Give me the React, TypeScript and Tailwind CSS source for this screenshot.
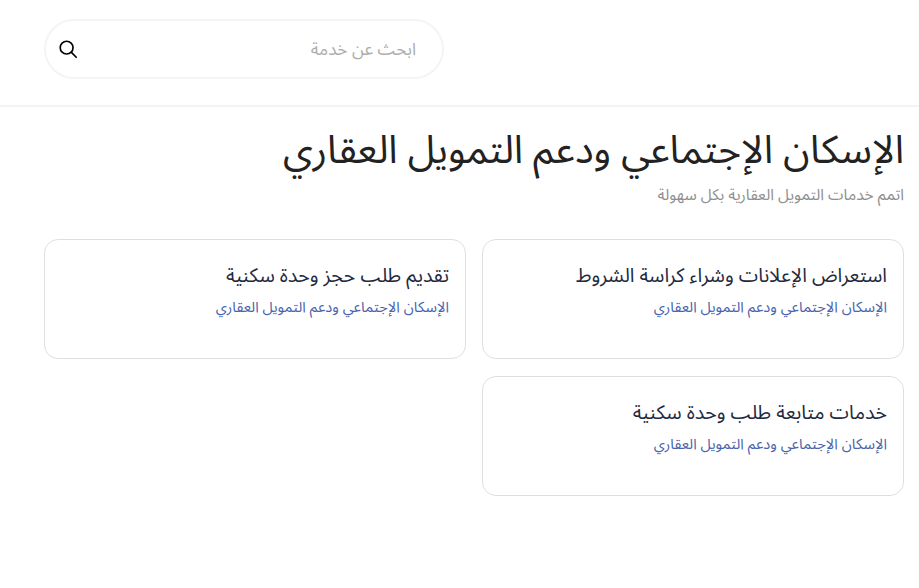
const font = "font-['Noto_Sans','Noto_Sans_Arabic','DejaVu_Sans',sans-serif]";

function ServiceCard({ title }: { title: string }) {
  return (
    <div className="h-[120px] rounded-[14px] border border-[#dfdfe2] bg-white px-4 pt-[17px]">
      <div className="text-[19.6px] leading-[36px] text-[#1f2a40]">{title}</div>
      <div className="mt-[1px] text-[14.7px] leading-[24px] text-[#4a63ad]">الإسكان الإجتماعي ودعم التمويل العقاري</div>
    </div>
  );
}

export default function App() {
  return (
    <div dir="rtl" className={`min-h-[588px] bg-white ${font}`}>
      <div className="flex h-[107px] justify-end border-b-2 border-[#f2f3f7] pl-[44px] pt-[19px]">
        <div className="flex h-[60px] w-[400px] items-center justify-between rounded-full border-2 border-[#f2f4f8] pl-[11px] pr-[26px]">
          <span className="-mt-[1px] text-[17.2px] text-[#adadad]">ابحث عن خدمة</span>
          <svg width="22" height="22" viewBox="0 0 24 24" fill="none" stroke="#000" strokeWidth="1.8" strokeLinecap="round">
            <circle cx="10.5" cy="10.5" r="7" />
            <path d="M16 16l5 5" />
          </svg>
        </div>
      </div>
      <div className="px-[15px]">
        <h1 className="mt-[14px] text-[39.1px] leading-[54px] text-[#222222]">الإسكان الإجتماعي ودعم التمويل العقاري</h1>
        <p className="mt-[6px] text-[15.6px] leading-[26px] text-[#8f8f8f]">اتمم خدمات التمويل العقارية بكل سهولة</p>
      </div>
      <div className="mx-[15px] mt-[32px] grid grid-cols-2 gap-x-4 gap-y-[17px] pl-[29px]">
        <ServiceCard title="استعراض الإعلانات وشراء كراسة الشروط" />
        <ServiceCard title="تقديم طلب حجز وحدة سكنية" />
        <ServiceCard title="خدمات متابعة طلب وحدة سكنية" />
      </div>
    </div>
  );
}
